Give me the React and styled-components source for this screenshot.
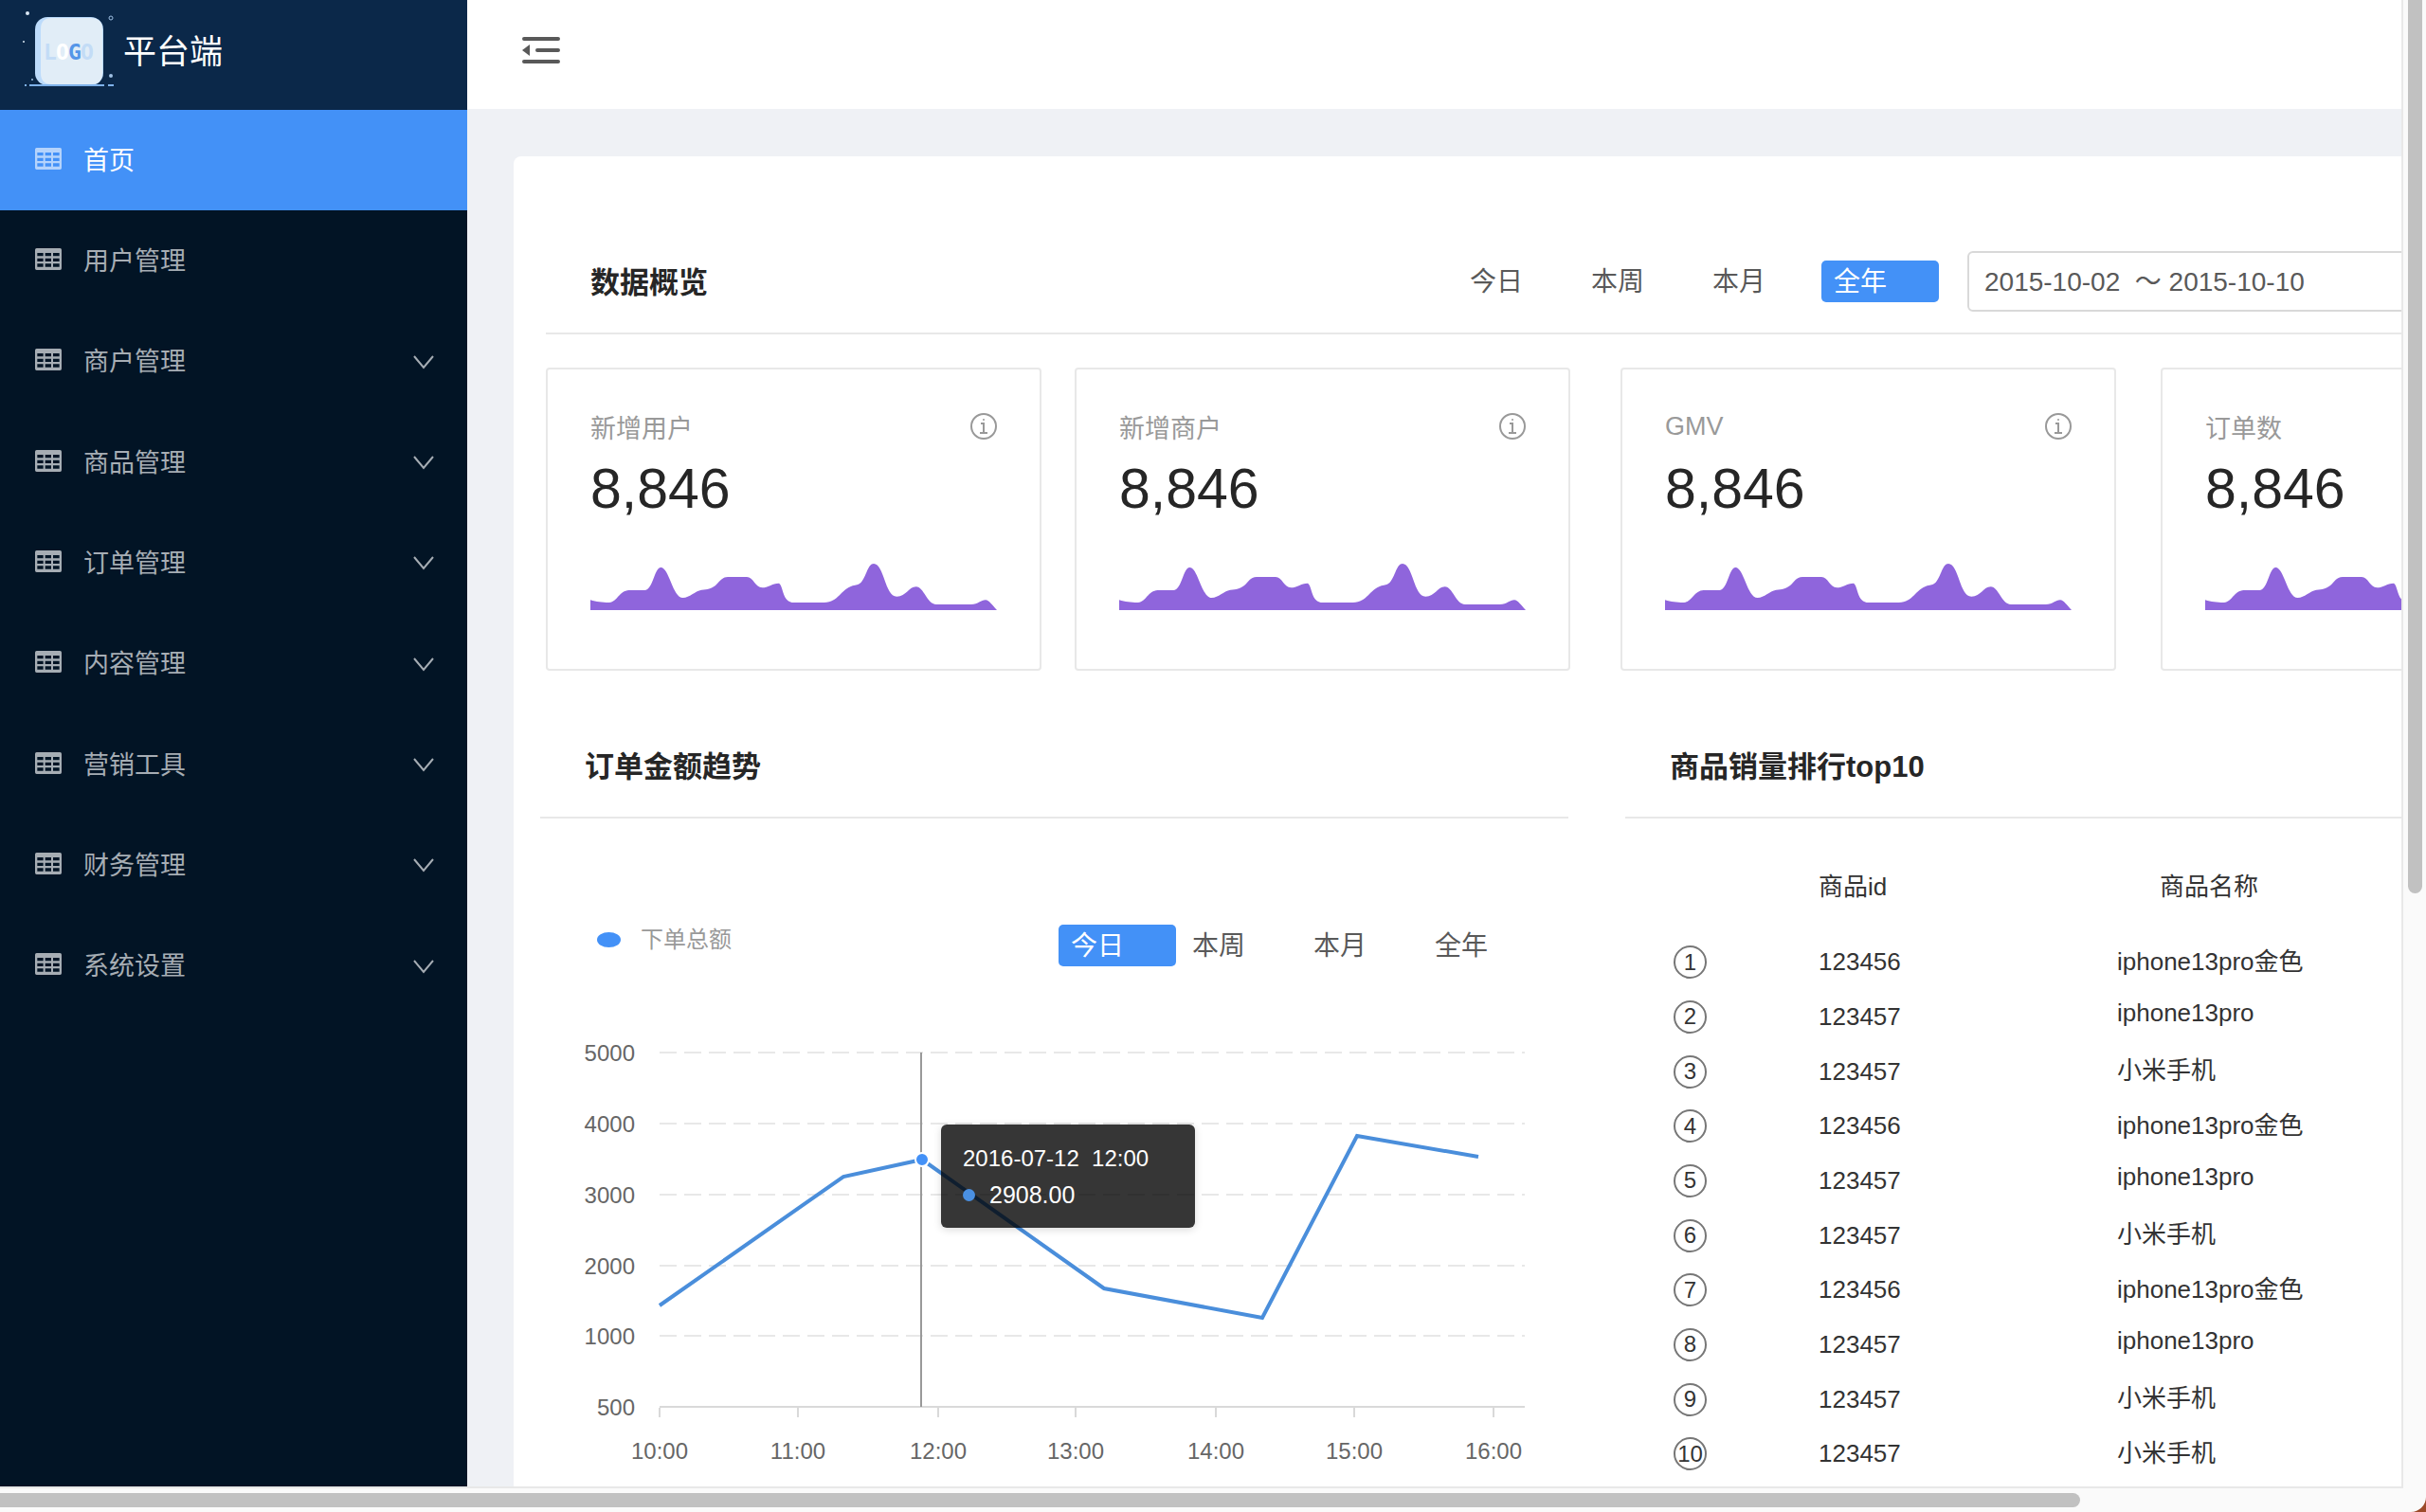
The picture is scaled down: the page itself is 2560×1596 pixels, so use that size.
import React, {useState} from "react";
import styled, {createGlobalStyle} from "styled-components";

const GlobalStyle = createGlobalStyle`
  * {
    box-sizing: border-box;
  }
  body {
    margin: 0;
    background: #9c4a2a;
    font-family: "Liberation Sans", "Noto Sans CJK SC", sans-serif;
    color: #333;
  }
  button, input {
    font-family: inherit;
  }
`;

const Frame = styled.div`
  height: 100vh;
  display: grid;
  grid-template-columns: minmax(0, 1fr) 24px;
  grid-template-rows: minmax(0, 1fr) 25px;
  background: #fafafa;
  border-radius: 0 0 16px 0;
  overflow: hidden;
`;

const Viewport = styled.div`
  overflow: hidden;
  border-right: 2px solid #e8e8e8;
  border-bottom: 2px solid #e8e8e8;
`;

const TrackY = styled.div`
  padding-left: 5px;
`;

const TrackX = styled.div`
  padding-top: 5px;
`;

const ThumbY = styled.div`
  width: 15px;
  height: 60%;
  background: #c1c1c1;
  border-radius: 0 0 8px 8px;
`;

const ThumbX = styled.div`
  width: 2195px;
  max-width: 90%;
  height: 15px;
  background: #c1c1c1;
  border-radius: 0 8px 8px 0;
`;

const Page = styled.div`
  display: flex;
  min-width: 2930px;
  min-height: 100%;
`;

const Sidebar = styled.aside`
  flex: 0 0 493px;
  background: #021425;
`;

const Brand = styled.div`
  display: flex;
  align-items: center;
  gap: 5px;
  height: 116px;
  padding: 0 0 4px 20px;
  background: #0b2849;
  color: #fff;
  font-size: 35px;
`;

const BrandName = styled.span`
  padding-bottom: 10px;
`;

const Menu = styled.nav`
  display: grid;
  grid-auto-rows: 1fr;
  height: 957px;
`;

const MenuItem = styled.a`
  display: flex;
  align-items: center;
  padding: 0 35px 0 37px;
  font-size: 27px;
  text-decoration: none;
  background: ${({$active}) => ($active ? "#4391f7" : "transparent")};
  color: ${({$active}) => ($active ? "#fff" : "#a6adb4")};

  svg:first-child {
    margin: 0 23px 4px 0;
    color: ${({$active}) => ($active ? "#b4d3fc" : "#a6adb4")};
  }
`;

const MenuLabel = styled.span`
  flex: 1;
  padding-bottom: 4px;
`;

const Main = styled.div`
  flex: 1;
  min-width: 0;
  background: #eff1f5;
`;

const Topbar = styled.header`
  display: flex;
  align-items: center;
  height: 115px;
  padding: 0 0 10px 56px;
  background: #fff;
`;

const ToggleButton = styled.button`
  display: flex;
  padding: 0;
  border: none;
  background: none;
  color: #595959;
  cursor: pointer;
`;

const Panel = styled.main`
  margin: 50px 49px 0;
  padding: 78px 28px 60px;
  background: #fff;
  border-radius: 8px;
`;

const Overview = styled.section`
  padding-left: 6px;
`;

const SectionHead = styled.div`
  display: flex;
  align-items: center;
  height: 110px;
  padding-left: 47px;
  border-bottom: 2px solid #e8e8e8;
`;

const SectionTitle = styled.h2`
  margin: 0;
  min-width: 915px;
  padding-bottom: 4px;
  font-size: 31px;
  font-weight: 700;
  color: #262626;
`;

const Filters = styled.div`
  display: flex;
  gap: 4px;
`;

const FilterButton = styled.button`
  width: 124px;
  height: 44px;
  padding: 2px 13px 0;
  border: none;
  border-radius: 5px;
  font-size: 28px;
  line-height: 42px;
  text-align: left;
  cursor: pointer;
  background: ${({$active}) => ($active ? "#4391f7" : "transparent")};
  color: ${({$active}) => ($active ? "#fff" : "#595959")};
`;

const DateRange = styled.input`
  flex: 1;
  height: 64px;
  margin-left: 30px;
  padding: 0 16px 4px;
  border: 2px solid #d9d9d9;
  border-radius: 6px;
  font-size: 28px;
  color: #595959;
  background: #fff;
`;

const Cards = styled.div`
  display: grid;
  grid-template-columns: 558px 576px 570px 523px;
  margin-top: 35px;
`;

const Card = styled.article`
  width: 523px;
  height: 320px;
  padding: 40px 45px;
  border: 2px solid #e8e8e8;
  border-radius: 4px;
`;

const CardHead = styled.div`
  display: flex;
  justify-content: space-between;
  align-items: center;
  height: 40px;
  font-size: 27px;
  color: #999;
`;

const CardValue = styled.div`
  margin-bottom: 32px;
  font-size: 59px;
  line-height: 92px;
  color: #262626;
`;

const Columns = styled.div`
  display: grid;
  grid-template-columns: 1085px 1fr;
  gap: 60px;
  margin-top: 46px;
`;

const TrendBar = styled.div`
  display: flex;
  justify-content: space-between;
  align-items: flex-start;
  margin-top: 112px;
  padding: 0 30px 0 60px;
`;

const Legend = styled.div`
  display: flex;
  align-items: center;
  gap: 21px;
  font-size: 24px;
  line-height: 32px;
  color: #999;
`;

const LegendMark = styled.i`
  width: 25px;
  height: 16px;
  border-radius: 50%;
  background: #4391f7;
`;

const ChartBox = styled.div`
  position: relative;
`;

const ChartSvg = styled.svg`
  display: block;
  width: 100%;

  text {
    font-size: 24px;
    fill: #666;
  }
`;

const Tooltip = styled.div`
  position: absolute;
  left: 423px;
  top: 167px;
  width: 268px;
  height: 109px;
  padding: 16px 23px;
  border-radius: 6px;
  background: rgba(0, 0, 0, 0.79);
  box-shadow: 0 2px 8px rgba(0, 0, 0, 0.15);
  color: #fff;
  font-size: 24px;
  line-height: 39px;
  white-space: pre;
`;

const TooltipRow = styled.div`
  display: flex;
  align-items: center;
  gap: 15px;
  font-size: 25px;

  i {
    width: 13px;
    height: 13px;
    border-radius: 50%;
    background: #4a90e2;
  }
`;

const RankTable = styled.table`
  width: 100%;
  margin-top: 19px;
  border-collapse: collapse;
  table-layout: fixed;
  font-size: 26px;
  color: #333;

  th, td {
    padding: 0;
    text-align: left;
    font-weight: 400;
  }
  th {
    height: 104px;
    padding-bottom: 4px;
  }
  th:last-child {
    padding-left: 45px;
  }
  td {
    height: 58px;
  }
  tr:nth-child(3n + 1) td {
    height: 57px;
  }
  td:first-child {
    padding-left: 51px;
  }
  td:last-child {
    padding-bottom: 7px;
  }
`;

const RankCol = styled.col`
  width: ${({$width}) => $width};
`;

const Rank = styled.span`
  display: flex;
  align-items: center;
  justify-content: center;
  width: 35px;
  height: 35px;
  border: 2px solid #777;
  border-radius: 50%;
  font-size: 24px;
  line-height: 32px;
`;

const menu = [
    {name: "首页", leaf: true},
    {name: "用户管理", leaf: true},
    {name: "商户管理"},
    {name: "商品管理"},
    {name: "订单管理"},
    {name: "内容管理"},
    {name: "营销工具"},
    {name: "财务管理"},
    {name: "系统设置"}
];

const cards = ["新增用户", "新增商户", "GMV", "订单数"];
const periods = ["今日", "本周", "本月", "全年"];

const goods = [
    ["123456", "iphone13pro金色"],
    ["123457", "iphone13pro"],
    ["123457", "小米手机"],
    ["123456", "iphone13pro金色"],
    ["123457", "iphone13pro"],
    ["123457", "小米手机"],
    ["123456", "iphone13pro金色"],
    ["123457", "iphone13pro"],
    ["123457", "小米手机"],
    ["123457", "小米手机"]
];

const yTicks = [
    ["5000", 91],
    ["4000", 166],
    ["3000", 241],
    ["2000", 316],
    ["1000", 390],
    ["500", 465]
];

const xTicks = [
    ["10:00", 126],
    ["11:00", 272],
    ["12:00", 420],
    ["13:00", 565],
    ["14:00", 713],
    ["15:00", 859],
    ["16:00", 1006]
];

function Logo() {
    return (
        <svg width="105" height="92" viewBox="20 10 105 92" aria-hidden="true">
            <rect x="37" y="18" width="72" height="72" rx="13" fill="#bcdbfb"/>
            <path d="M54 19H96Q108 19 108 31V77Q108 89 96 89H54Q43 89 43 77V31Q43 19 54 19Z" fill="#e1edf7"/>
            <g fontFamily="'DejaVu Sans Mono', monospace" fontSize="23" fontWeight="700" textAnchor="middle">
                <text x="53" y="63" fill="#c3dcf6">L</text>
                <text x="66" y="63" fill="#fff">O</text>
                <text x="79" y="63" fill="#5596e8">G</text>
                <text x="92" y="63" fill="#c3dcf6">O</text>
            </g>
            <path d="M26 90h2M31 90h79M114 90h6" stroke="#7fb2ea" strokeWidth="2"/>
            <circle cx="29" cy="14" r="2" fill="#dbe8f5"/>
            <circle cx="117" cy="19" r="2" fill="none" stroke="#9fc0e4"/>
            <circle cx="25" cy="44" r="1" fill="#dbe8f5"/>
            <circle cx="34" cy="84" r="1" fill="#9fc0e4"/>
            <circle cx="117" cy="80" r="2" fill="#9fc0e4"/>
        </svg>
    );
}

function TableIcon() {
    return (
        <svg width="28" height="23" viewBox="0 0 84 69" aria-hidden="true">
            <path
                fill="currentColor"
                fillRule="evenodd"
                d="M5 0H79Q84 0 84 5V64Q84 69 79 69H5Q0 69 0 64V5Q0 0 5 0ZM7 15V25H26V15ZM32 15V25H51V15ZM57 15V25H77V15ZM7 32V42H26V32ZM32 32V42H51V32ZM57 32V42H77V32ZM7 49V59H26V49ZM32 49V59H51V49ZM57 49V59H77V49Z"
            />
        </svg>
    );
}

function ChevronIcon() {
    return (
        <svg width="22" height="16" viewBox="0 0 22 16" fill="none" stroke="currentColor" strokeWidth="2" aria-hidden="true">
            <path d="M1 2L11 14L21 2"/>
        </svg>
    );
}

function FoldIcon() {
    return (
        <svg width="44" height="32" viewBox="0 0 44 32" fill="none" stroke="currentColor" strokeWidth="4" strokeLinecap="round" aria-hidden="true">
            <path d="M4 4H40M18 16H40M4 28H40"/>
            <path d="M2 16L10 10V22Z" fill="currentColor" stroke="none"/>
        </svg>
    );
}

function InfoIcon() {
    return (
        <svg width="28" height="28" viewBox="0 0 28 28" fill="none" stroke="currentColor" strokeWidth="2" aria-hidden="true">
            <circle cx="14" cy="14" r="13"/>
            <path d="M11 11H14V20M10 21H18"/>
            <circle cx="14" cy="7" r="1" fill="currentColor" stroke="none"/>
        </svg>
    );
}

function Sparkline() {
    return (
        <svg width="429" height="50" viewBox="0 0 1287 150" aria-hidden="true">
            <path
                fill="#8f65dc"
                d="M0 118C20 124 35 126 60 126C85 124 92 88 122 87H170C198 90 202 15 223 15C250 15 260 111 293 111C315 110 330 90 352 86C372 84 380 84 396 72C408 62 415 45 435 45H495C516 45 522 79 544 79C562 79 575 66 597 65C612 74 606 126 645 126H740C788 124 790 86 830 73C842 69 846 72 857 62C874 44 878 3 897 3C930 3 932 107 970 107C1000 107 1008 76 1031 76C1056 76 1065 132 1095 132H1205C1228 132 1236 118 1251 118C1262 119 1272 134 1287 150H0Z"
            />
        </svg>
    );
}

function PeriodFilter({initial}) {
    const [current, setCurrent] = useState(initial);

    return (
        <Filters>
            {periods.map(period => (
                <FilterButton
                    key={period}
                    type="button"
                    $active={period === current}
                    onClick={() => setCurrent(period)}
                >
                    {period}
                </FilterButton>
            ))}
        </Filters>
    );
}

function TrendChart() {
    return (
        <ChartBox>
            <ChartSvg viewBox="0 0 1085 540" role="img" aria-label="订单金额趋势">
                {yTicks.map(([label, y], index) => (
                    <g key={label}>
                        <text x="100" y={y + 9} textAnchor="end">{label}</text>
                        <line
                            x1="126"
                            x2="1039"
                            y1={y}
                            y2={y}
                            stroke={index === yTicks.length - 1 ? "#d9d9d9" : "#e8e8e8"}
                            strokeWidth="2"
                            strokeDasharray={index === yTicks.length - 1 ? "none" : "18 8"}
                        />
                    </g>
                ))}
                {xTicks.map(([label, x]) => (
                    <g key={label}>
                        <line x1={x} x2={x} y1="466" y2="476" stroke="#d9d9d9" strokeWidth="2"/>
                        <text x={x} y="520" textAnchor="middle">{label}</text>
                    </g>
                ))}
                <line x1="402" x2="402" y1="91" y2="465" stroke="#999" strokeWidth="2"/>
                <polyline
                    points="126,358 320,222 403,204 595,340 762,371 862,179 990,201"
                    fill="none"
                    stroke="#4a8edb"
                    strokeWidth="4"
                />
                <circle cx="403" cy="204" r="7" fill="#4391f7" stroke="#fff" strokeWidth="2"/>
            </ChartSvg>
            <Tooltip>
                <div>{"2016-07-12  12:00"}</div>
                <TooltipRow><i/>2908.00</TooltipRow>
            </Tooltip>
        </ChartBox>
    );
}

export default function App() {
    const [range, setRange] = useState("2015-10-02  ～ 2015-10-10");

    return (
        <Frame>
            <GlobalStyle/>
            <Viewport>
                <Page>
                    <Sidebar>
                        <Brand>
                            <Logo/>
                            <BrandName>平台端</BrandName>
                        </Brand>
                        <Menu>
                            {menu.map(({name, leaf}, index) => (
                                <MenuItem key={name} href="#" $active={index === 0}>
                                    <TableIcon/>
                                    <MenuLabel>{name}</MenuLabel>
                                    {!leaf && <ChevronIcon/>}
                                </MenuItem>
                            ))}
                        </Menu>
                    </Sidebar>
                    <Main>
                        <Topbar>
                            <ToggleButton type="button" aria-label="收起菜单">
                                <FoldIcon/>
                            </ToggleButton>
                        </Topbar>
                        <Panel>
                            <Overview>
                                <SectionHead>
                                    <SectionTitle>数据概览</SectionTitle>
                                    <PeriodFilter initial="全年"/>
                                    <DateRange
                                        aria-label="日期范围"
                                        value={range}
                                        onChange={e => setRange(e.target.value)}
                                    />
                                </SectionHead>
                                <Cards>
                                    {cards.map(name => (
                                        <Card key={name}>
                                            <CardHead>
                                                {name}
                                                <InfoIcon/>
                                            </CardHead>
                                            <CardValue>8,846</CardValue>
                                            <Sparkline/>
                                        </Card>
                                    ))}
                                </Cards>
                            </Overview>
                            <Columns>
                                <section>
                                    <SectionHead>
                                        <SectionTitle>订单金额趋势</SectionTitle>
                                    </SectionHead>
                                    <TrendBar>
                                        <Legend>
                                            <LegendMark/>
                                            下单总额
                                        </Legend>
                                        <PeriodFilter initial="今日"/>
                                    </TrendBar>
                                    <TrendChart/>
                                </section>
                                <section>
                                    <SectionHead>
                                        <SectionTitle>商品销量排行top10</SectionTitle>
                                    </SectionHead>
                                    <RankTable>
                                        <colgroup>
                                            <RankCol $width="204px"/>
                                            <RankCol $width="315px"/>
                                            <RankCol $width="auto"/>
                                        </colgroup>
                                        <thead>
                                            <tr>
                                                <th aria-label="排名"/>
                                                <th>商品id</th>
                                                <th>商品名称</th>
                                            </tr>
                                        </thead>
                                        <tbody>
                                            {goods.map(([id, name], index) => (
                                                <tr key={index}>
                                                    <td><Rank>{index + 1}</Rank></td>
                                                    <td>{id}</td>
                                                    <td>{name}</td>
                                                </tr>
                                            ))}
                                        </tbody>
                                    </RankTable>
                                </section>
                            </Columns>
                        </Panel>
                    </Main>
                </Page>
            </Viewport>
            <TrackY><ThumbY/></TrackY>
            <TrackX><ThumbX/></TrackX>
        </Frame>
    );
}
